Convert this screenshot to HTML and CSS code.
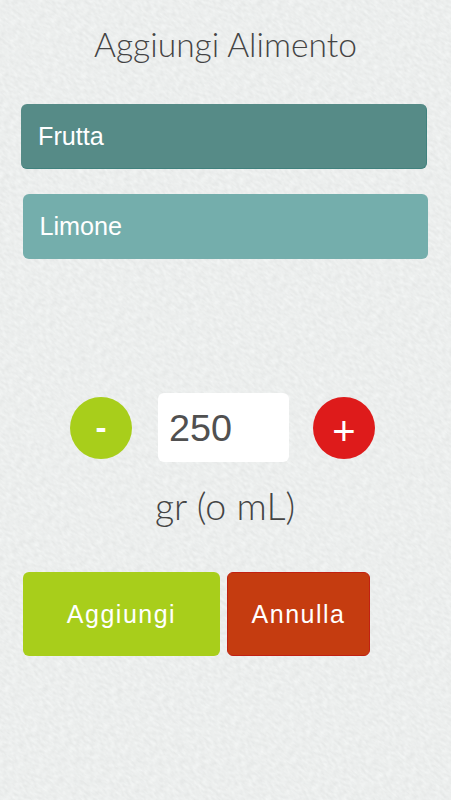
FILE: index.html
```html
<!DOCTYPE html>
<html lang="it">
<head>
<meta charset="utf-8">
<title>Aggiungi Alimento</title>
<link rel="stylesheet" href="styles.css">
</head>
<body>
<svg class="texture" aria-hidden="true">
  <filter id="paper" x="0" y="0" width="100%" height="100%" color-interpolation-filters="sRGB">
    <feTurbulence type="fractalNoise" baseFrequency="0.17 0.36" numOctaves="3" seed="4"/>
    <feColorMatrix type="matrix" values="0.085 0 0 0 0.882  0.085 0 0 0 0.891  0.085 0 0 0 0.888  0 0 0 0 1"/>
  </filter>
  <rect x="-500" y="-500" width="1600" height="1800" transform="rotate(40 225 400)" filter="url(#paper)"/>
</svg>
<main class="screen">
  <h1 class="title">Aggiungi Alimento</h1>
  <div class="field category">Frutta</div>
  <div class="field food">Limone</div>
  <div class="quantity">
    <button class="round minus">-</button>
    <div class="amount">250</div>
    <button class="round plus">+</button>
  </div>
  <p class="unit">gr (o mL)</p>
  <div class="actions">
    <button class="action add">Aggiungi</button>
    <button class="action cancel">Annulla</button>
  </div>
</main>
</body>
</html>
```
FILE: styles.css
```css
* { box-sizing: border-box; }
body {
  margin: 0;
  background: #ebeeed;
  font-family: "Liberation Sans", Arial, sans-serif;
  overflow: hidden;
}
.texture {
  position: absolute;
  inset: 0;
  width: 100%;
  height: 100%;
}
.screen {
  position: relative;
  height: 800px;
  padding: 19px 22px 0;
}
.title, .unit {
  margin: 0;
  font-family: Lato, sans-serif;
  font-weight: 300;
  color: #444;
  text-align: center;
  white-space: nowrap;
}
.title {
  font-size: 33.6px;
  line-height: 50px;
  margin-bottom: 35px;
}
.field {
  height: 65px;
  width: 406px;
  padding-left: 17px;
  border-radius: 6px;
  color: #fff;
  font-size: 25.2px;
  line-height: 65px;
}
.category {
  background: #568b87;
  border: solid #40827e;
  border-width: 0 1px 1px 0;
  margin: 0 0 25px -1px;
}
.food {
  width: 405px;
  background: #74aeac;
  margin-left: 1px;
  padding-left: 16.5px;
}
.quantity {
  display: flex;
  align-items: center;
  margin: 134px 0 0 48px;
  height: 69px;
}
.round {
  width: 62px;
  height: 62px;
  padding: 0;
  border: 0;
  border-radius: 50%;
  color: #fff;
  font: 40px/68px "Liberation Sans", Arial, sans-serif;
  margin-top: 1px;
}
.minus {
  background: #a8ce1b;
  margin-left: 0.4px;
  font-size: 33px;
  font-weight: bold;
  line-height: 62px;
  padding-right: 1px;
}
.plus { background: #de1b1b; }
.amount {
  width: 131px;
  height: 69px;
  margin: 0 24px 0 25.6px;
  padding-left: 11px;
  border-radius: 6px;
  background: #fff;
  color: #505050;
  font-size: 37.8px;
  line-height: 70px;
}
.unit {
  margin: 19px 1px 0 0;
  font-size: 37.6px;
  line-height: 50px;
}
.actions {
  display: flex;
  gap: 7px;
  margin: 41px 0 0 1px;
}
.action {
  height: 84px;
  padding: 0;
  border: 0;
  border-radius: 6px;
  color: #fff;
  font: 25px/84px "Liberation Sans", Arial, sans-serif;
  letter-spacing: 1.5px;
}
.add {
  width: 197px;
  background: #a8ce1b;
}
.cancel {
  width: 143px;
  background: #c53c10;
  border: 1px solid #c22112;
  line-height: 82px;
}
```
